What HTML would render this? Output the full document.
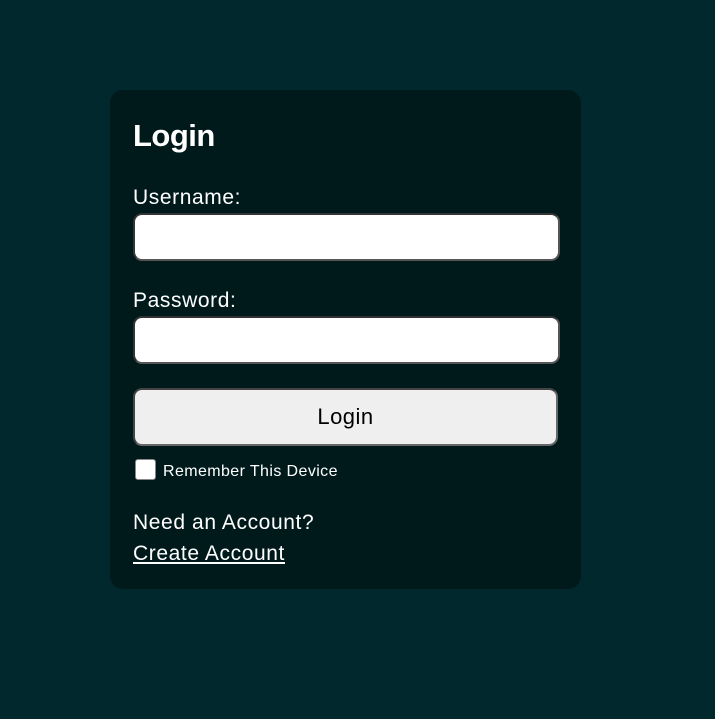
<!DOCTYPE html>
<html><head><meta charset="utf-8"><style>
html,body{margin:0;padding:0;background:#00282d;width:715px;height:719px;overflow:hidden;font-family:"Liberation Sans",sans-serif;color:#fff}
.card{position:absolute;left:110px;top:90px;width:471px;height:499px;background:#001a1c;border-radius:13px}
.t{position:absolute;white-space:nowrap}
.l{font-size:21px;letter-spacing:0.6px}
.inp{position:absolute;left:133px;width:423px;height:44px;background:#fff;border:2px solid #555;border-top-color:#333;border-left-color:#333;border-radius:9px}
.btn{position:absolute;left:133px;top:388px;width:421px;height:54px;background:#efefef;border:2px solid #666;border-top-color:#444;border-left-color:#444;border-radius:9px;color:#000;font-size:22px;letter-spacing:0.5px;text-align:center;line-height:54px}
.cb{position:absolute;left:135px;top:459px;width:19px;height:19px;background:#fff;border:1px solid #888;border-radius:3px}
</style></head><body>
<div class="card"></div>
<div class="t" style="left:133px;top:118px;font-size:31px;font-weight:bold;letter-spacing:-0.5px">Login</div>
<div class="t l" style="left:133px;top:186px">Username:</div>
<div class="inp" style="top:213px"></div>
<div class="t l" style="left:133px;top:289px">Password:</div>
<div class="inp" style="top:316px"></div>
<div class="btn">Login</div>
<div class="cb"></div>
<div class="t" style="left:163px;top:463px;font-size:16px;letter-spacing:0.4px">Remember This Device</div>
<div class="t l" style="left:133px;top:511px">Need an Account?</div>
<div class="t l" style="left:133px;top:542px;text-decoration:underline">Create Account</div>
</body></html>
